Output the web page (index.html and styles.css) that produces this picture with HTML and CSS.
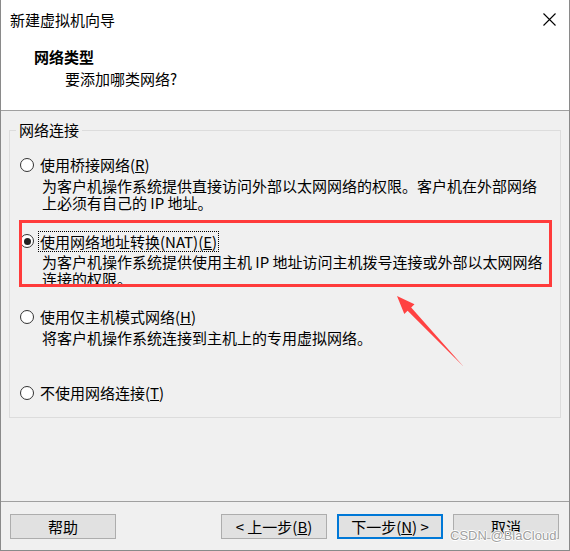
FILE: index.html
```html
<!DOCTYPE html>
<html lang="zh-CN">
<head>
<meta charset="utf-8">
<title>新建虚拟机向导</title>
<link rel="stylesheet" href="styles.css">
</head>
<body>
<div class="window">
  <header class="head">
    <div class="titlebar">
      <span class="title">新建虚拟机向导</span>
      <svg class="close" width="13" height="13" viewBox="0 0 13 13"><path d="M0.5 0.5 L12.5 12.5 M12.5 0.5 L0.5 12.5" stroke="#000" stroke-width="1.1" fill="none"/></svg>
    </div>
    <div class="heading">网络类型</div>
    <div class="subheading">要添加哪类网络?</div>
  </header>
  <main class="main">
    <fieldset class="group">
      <legend class="legend">网络连接</legend>
      <div class="options">
        <div class="option">
          <div class="opt-label"><span class="radio"></span><span class="label-text">使用桥接网络(<u>R</u>)</span></div>
          <div class="desc"><span class="line">为客户机操作系统提供直接访问外部以太网网络的权限。客户机在外部网络</span><span class="line">上必须有自己的 IP 地址。</span></div>
        </div>
        <div class="option">
          <div class="opt-label"><span class="radio checked"></span><span class="label-text focus">使用网络地址转换(NAT)(<u>E</u>)</span></div>
          <div class="desc"><span class="line">为客户机操作系统提供使用主机 IP 地址访问主机拨号连接或外部以太网网络</span><span class="line">连接的权限。</span></div>
        </div>
        <div class="option">
          <div class="opt-label"><span class="radio"></span><span class="label-text">使用仅主机模式网络(<u>H</u>)</span></div>
          <div class="desc tall"><span class="line">将客户机操作系统连接到主机上的专用虚拟网络。</span></div>
        </div>
        <div class="option">
          <div class="opt-label"><span class="radio"></span><span class="label-text">不使用网络连接(<u>T</u>)</span></div>
        </div>
      </div>
    </fieldset>
  </main>
  <footer class="footer">
    <button class="btn help">帮助</button>
    <button class="btn">&lt; 上一步(<u>B</u>)</button>
    <button class="btn primary">下一步(<u>N</u>) &gt;</button>
    <button class="btn">取消</button>
  </footer>
  <div class="highlight"></div>
  <svg class="arrow" width="80" height="80" viewBox="0 0 80 80"><polygon points="6,6 23.5,14.3 20.2,17.4 72.5,76.5 16.6,20.8 13.3,23.9" fill="#ff4242"/></svg>
  <div class="watermark">CSDN @BlaCloud</div>
</div>
</body>
</html>
```
FILE: styles.css
```css
html, body {
  margin: 0;
  padding: 0;
  background: #f0f0f0;
}

.window {
  position: relative;
  width: 570px;
  height: 551px;
  box-sizing: border-box;
  border-left: 1px solid #8a8a8a;
  border-right: 1px solid #8a8a8a;
  border-bottom: 1px solid #8a8a8a;
  display: flex;
  flex-direction: column;
  font-family: "Noto Sans CJK SC", "Noto Sans", sans-serif;
  font-size: 15px;
  color: #000;
  background: #f0f0f0;
  overflow: hidden;
}

.head {
  height: 110px;
  flex: none;
  background: #fff;
  border-bottom: 1px solid #a0a0a0;
}

.titlebar {
  display: flex;
  align-items: center;
  justify-content: space-between;
  height: 21px;
  line-height: 21px;
  margin-top: 9px;
  padding: 0 13px 0 9px;
}

.close {
  display: block;
}

.heading {
  font-weight: bold;
  line-height: 20px;
  margin-top: 17px;
  padding-left: 33px;
}

.subheading {
  line-height: 20px;
  margin-top: 2px;
  padding-left: 64px;
}

.main {
  flex: 1;
  background: #f0f0f0;
}

.group {
  margin: 9px 8px 0 8px;
  padding: 0;
  border: 1px solid #dcdcdc;
  min-width: 0;
}

.legend {
  margin-left: 6px;
  padding: 0 3px;
  line-height: 20px;
}

.options {
  display: flex;
  flex-direction: column;
  gap: 20px;
  padding: 15px 0 14px 10px;
}

.opt-label {
  display: flex;
  align-items: center;
  height: 20px;
  line-height: 20px;
  white-space: nowrap;
}

.radio {
  position: relative;
  width: 14px;
  height: 14px;
  box-sizing: border-box;
  border: 1px solid #333;
  border-radius: 50%;
  background: #fff;
  margin-right: 6px;
  flex: none;
}

.radio.checked::after {
  content: "";
  position: absolute;
  left: 2.5px;
  top: 2.5px;
  width: 7px;
  height: 7px;
  border-radius: 50%;
  background: #222;
}

.label-text.focus {
  border: 1px dotted #000;
  margin-left: -2px;
  padding: 0 1px;
  line-height: 19px;
}

.desc {
  display: flex;
  flex-direction: column;
  padding-left: 22px;
  margin-top: 2px;
  white-space: nowrap;
}

.line {
  display: block;
  height: 17px;
  line-height: 17px;
}

.desc.tall {
  min-height: 34px;
}

.footer {
  flex: none;
  height: 49px;
  box-sizing: border-box;
  border-top: 1px solid #a0a0a0;
  display: flex;
  align-items: flex-start;
  gap: 10px;
  padding: 12px 10px 0 9px;
}

.btn {
  width: 106px;
  height: 25px;
  box-sizing: border-box;
  border: 1px solid #adadad;
  background: #e1e1e1;
  font-family: "Noto Sans CJK SC", "Noto Sans", sans-serif;
  font-size: 15px;
  line-height: 21px;
  color: #000;
  padding: 0;
  margin: 0;
}

.btn.help {
  margin-right: auto;
}

.btn.primary {
  border: 2px solid #0078d7;
  line-height: 19px;
}

.highlight {
  position: absolute;
  left: 18px;
  top: 220px;
  width: 533px;
  height: 67px;
  box-sizing: border-box;
  border: 3px solid #ff3b3b;
}

.arrow {
  position: absolute;
  left: 390px;
  top: 290px;
}

.watermark {
  position: absolute;
  left: 449px;
  top: 528px;
  font-family: "Liberation Sans", Arial, sans-serif;
  font-size: 13px;
  line-height: 16px;
  color: #a0a0a0;
  text-shadow: 1px 0 0 #fff, -1px 0 0 #fff, 0 1px 0 #fff, 0 -1px 0 #fff;
  white-space: nowrap;
}
```
